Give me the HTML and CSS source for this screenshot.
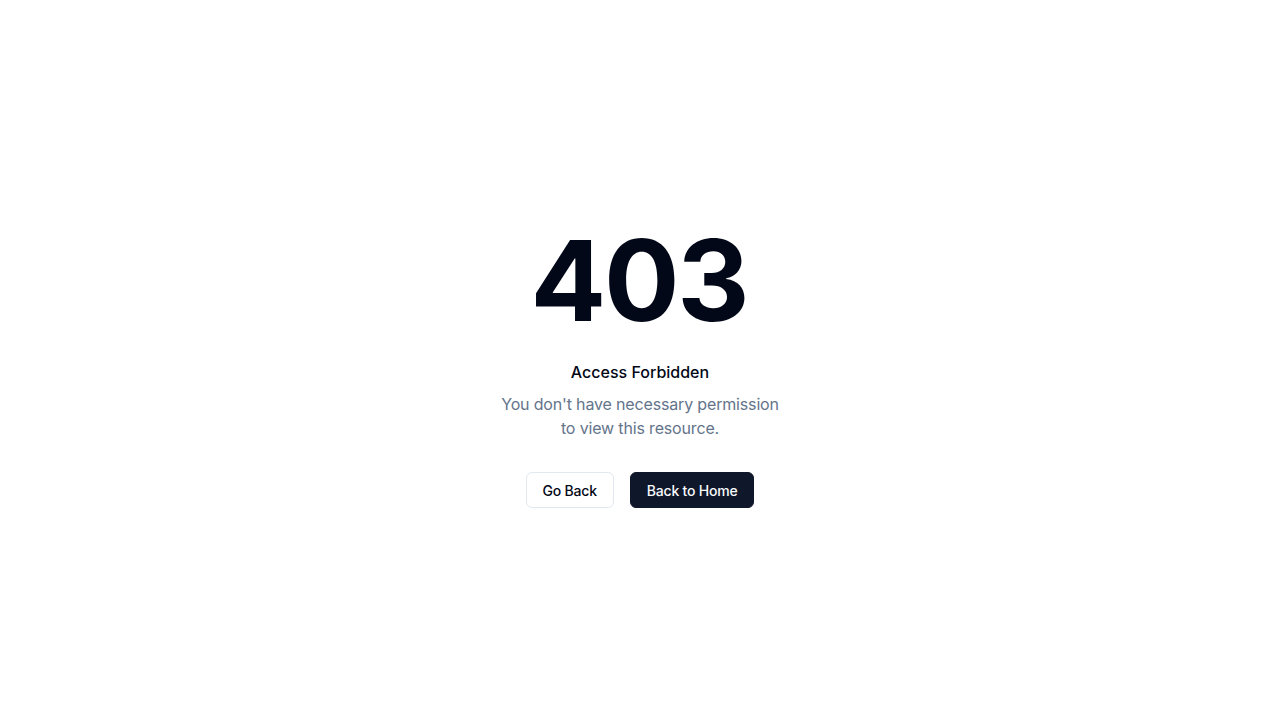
FILE: index.html
```html
<!DOCTYPE html>
<html lang="en">
<head>
<meta charset="utf-8">
<title>403 - Access Forbidden</title>
<link rel="stylesheet" href="styles.css">
</head>
<body>
<main class="page">
  <div class="content">
    <h1 class="code">403</h1>
    <h2 class="title">Access Forbidden</h2>
    <p class="desc">You don't have necessary permission to view this resource.</p>
    <div class="actions">
      <button class="btn btn-outline" type="button">Go Back</button>
      <button class="btn btn-primary" type="button">Back to Home</button>
    </div>
  </div>
</main>
</body>
</html>
```

FILE: styles.css
```css
* { box-sizing: border-box; }
html, body { margin: 0; padding: 0; }
body {
  font-family: Inter, "Noto Sans", sans-serif;
  background: #ffffff;
  color: #020817;
}
.page {
  min-height: 100vh;
  display: flex;
  align-items: center;
  justify-content: center;
}
.content {
  display: flex;
  flex-direction: column;
  align-items: center;
  text-align: center;
  padding-top: 12px;
}
.code {
  margin: 0;
  font-size: 112px;
  line-height: 1;
  font-weight: 700;
  color: #020817;
  letter-spacing: -0.02em;
  transform: translateX(-1px);
}
.title {
  margin: 24px 0 0;
  font-size: 16px;
  line-height: 24px;
  font-weight: 500;
  color: #020817;
}
.desc {
  margin: 8px 0 0;
  max-width: 290px;
  font-size: 16px;
  line-height: 24px;
  letter-spacing: -0.01em;
  color: #64748b;
}
.actions {
  display: flex;
  gap: 16px;
  margin-top: 32px;
}
.btn {
  height: 36px;
  padding: 0 16px;
  border-radius: 6px;
  font-family: inherit;
  font-size: 14px;
  font-weight: 500;
  letter-spacing: -0.015em;
  cursor: pointer;
}
.btn-outline {
  background: #ffffff;
  border: 1px solid #e2e8f0;
  color: #020817;
}
.btn-primary {
  background: #0f172a;
  border: 1px solid #0f172a;
  color: #f8fafc;
}
```
